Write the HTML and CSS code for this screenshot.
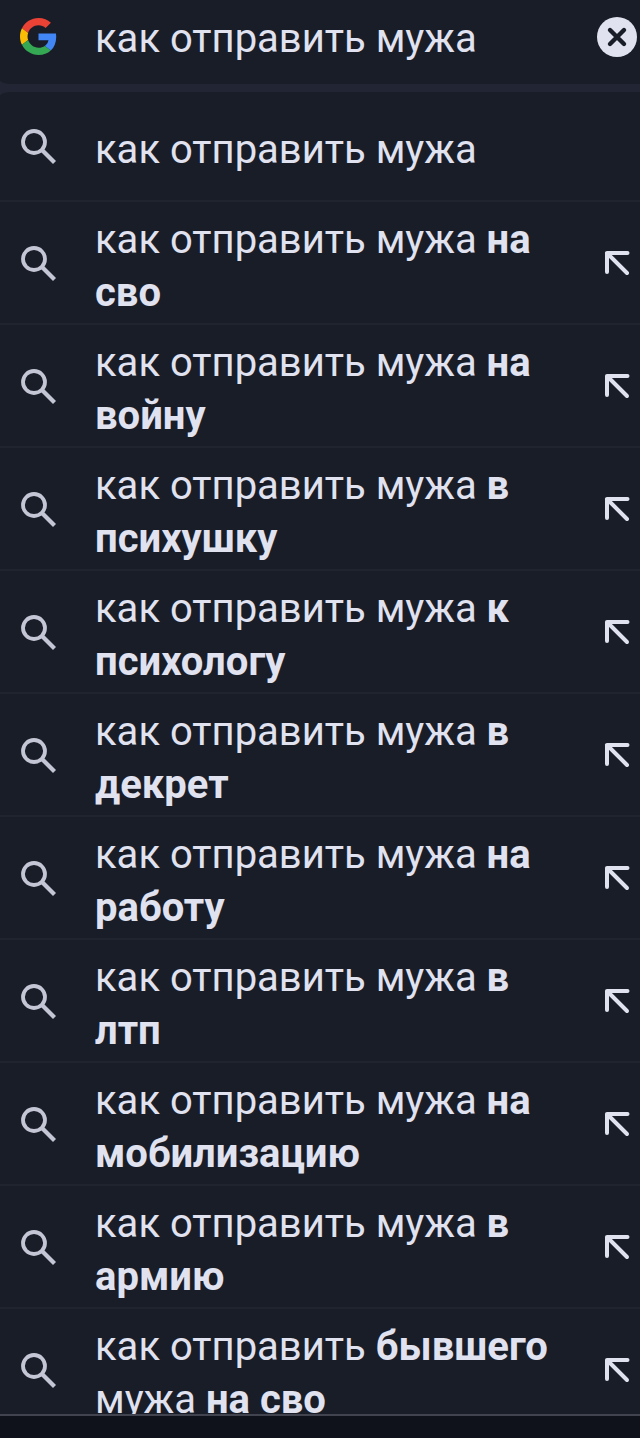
FILE: index.html
```html
<!DOCTYPE html>
<html lang="ru">
<head>
  <meta charset="UTF-8" />
  <meta name="viewport" content="width=device-width, initial-scale=1" />
  <title>как отправить мужа</title>
  <link rel="stylesheet" href="styles.css">
</head>
<body>
  <svg class="sprite" aria-hidden="true">
    <symbol id="search" viewBox="0 0 36 36">
      <circle cx="14" cy="14" r="11" fill="none" stroke="currentColor" stroke-width="3.8" />
      <path d="M22.5 22.5 34.5 34.5" fill="none" stroke="currentColor" stroke-width="4.2" />
    </symbol>
    <symbol id="arrow" viewBox="0 0 26 26">
      <path d="M3 22V3H23.5M3 3 23 23" fill="none" stroke="currentColor" stroke-width="4" stroke-linecap="round" stroke-linejoin="round" />
    </symbol>
  </svg>

  <form class="search-bar" role="search">
    <svg class="logo" viewBox="0 0 48 48" aria-hidden="true">
      <path fill="#ea4335" d="M24 9.5c3.54 0 6.71 1.22 9.21 3.6l6.85-6.85C35.9 2.38 30.47 0 24 0 14.62 0 6.51 5.38 2.56 13.22l7.98 6.19C12.43 13.72 17.74 9.5 24 9.5z" />
      <path fill="#4285f4" d="M46.98 24.55c0-1.57-.15-3.09-.38-4.55H24v9.02h12.94c-.58 2.96-2.26 5.48-4.78 7.18l7.73 6c4.51-4.18 7.09-10.36 7.09-17.65z" />
      <path fill="#fbbc05" d="M10.53 28.59c-.48-1.45-.76-2.99-.76-4.59s.27-3.14.76-4.59l-7.98-6.19C.92 16.46 0 20.12 0 24c0 3.88.92 7.54 2.56 10.78l7.97-6.19z" />
      <path fill="#34a853" d="M24 48c6.48 0 11.93-2.13 15.89-5.81l-7.73-6c-2.15 1.45-4.92 2.3-8.16 2.3-6.26 0-11.57-4.22-13.47-9.91l-7.98 6.19C6.51 42.62 14.62 48 24 48z" />
    </svg>
    <input class="query" type="text" aria-label="Поиск" value="как отправить мужа" />
    <button class="clear" type="reset" aria-label="Очистить">
      <svg viewBox="0 0 40 40" aria-hidden="true">
        <circle cx="20" cy="20" r="20" fill="currentColor" />
        <path d="M13 13 27 27M27 13 13 27" stroke="#191d28" stroke-width="4.4" stroke-linecap="round" />
      </svg>
    </button>
  </form>

  <ul class="suggestions">
    <li class="row single">
      <button class="suggestion"><svg class="icon"><use href="#search" /></svg><span>как отправить мужа</span></button>
    </li>
    <li class="row">
      <button class="suggestion"><svg class="icon"><use href="#search" /></svg><span>как отправить мужа <b>на сво</b></span></button>
      <button class="fill" aria-label="Вставить"><svg><use href="#arrow" /></svg></button>
    </li>
    <li class="row">
      <button class="suggestion"><svg class="icon"><use href="#search" /></svg><span>как отправить мужа <b>на войну</b></span></button>
      <button class="fill" aria-label="Вставить"><svg><use href="#arrow" /></svg></button>
    </li>
    <li class="row">
      <button class="suggestion"><svg class="icon"><use href="#search" /></svg><span>как отправить мужа <b>в психушку</b></span></button>
      <button class="fill" aria-label="Вставить"><svg><use href="#arrow" /></svg></button>
    </li>
    <li class="row">
      <button class="suggestion"><svg class="icon"><use href="#search" /></svg><span>как отправить мужа <b>к психологу</b></span></button>
      <button class="fill" aria-label="Вставить"><svg><use href="#arrow" /></svg></button>
    </li>
    <li class="row">
      <button class="suggestion"><svg class="icon"><use href="#search" /></svg><span>как отправить мужа <b>в декрет</b></span></button>
      <button class="fill" aria-label="Вставить"><svg><use href="#arrow" /></svg></button>
    </li>
    <li class="row">
      <button class="suggestion"><svg class="icon"><use href="#search" /></svg><span>как отправить мужа <b>на работу</b></span></button>
      <button class="fill" aria-label="Вставить"><svg><use href="#arrow" /></svg></button>
    </li>
    <li class="row">
      <button class="suggestion"><svg class="icon"><use href="#search" /></svg><span>как отправить мужа <b>в лтп</b></span></button>
      <button class="fill" aria-label="Вставить"><svg><use href="#arrow" /></svg></button>
    </li>
    <li class="row">
      <button class="suggestion"><svg class="icon"><use href="#search" /></svg><span>как отправить мужа <b>на мобилизацию</b></span></button>
      <button class="fill" aria-label="Вставить"><svg><use href="#arrow" /></svg></button>
    </li>
    <li class="row">
      <button class="suggestion"><svg class="icon"><use href="#search" /></svg><span>как отправить мужа <b>в армию</b></span></button>
      <button class="fill" aria-label="Вставить"><svg><use href="#arrow" /></svg></button>
    </li>
    <li class="row">
      <button class="suggestion"><svg class="icon"><use href="#search" /></svg><span>как отправить <b>бывшего</b> мужа <b>на сво</b></span></button>
      <button class="fill" aria-label="Вставить"><svg><use href="#arrow" /></svg></button>
    </li>
  </ul>

  <div class="bottom-bar"></div>
</body>
</html>
```
FILE: styles.css
```css
* {
  box-sizing: border-box;
}
body {
  margin: 0;
  height: 100vh;
  display: flex;
  flex-direction: column;
  background: #222533;
  color: #e0e2f0;
  font-family: Roboto, sans-serif;
  font-size: 40px;
  line-height: 53px;
}
button,
input {
  font: inherit;
  color: inherit;
  background: none;
  border: none;
  padding: 0;
  outline: none;
}
button {
  cursor: pointer;
}
svg {
  display: block;
}
.sprite {
  position: absolute;
  width: 0;
  height: 0;
}
.search-bar {
  flex: none;
  display: flex;
  align-items: center;
  padding: 9px 3px 20px 20px;
  background: #191d28;
  border-bottom-left-radius: 12px 4px;
}
.logo {
  flex: none;
  width: 37px;
  height: 37px;
  margin-right: 38px;
}
.query {
  flex: 1;
  min-width: 0;
  height: 55px;
  padding-top: 4px;
}
.clear,
.clear svg {
  flex: none;
  width: 40px;
  height: 40px;
}
.suggestions {
  flex: 1;
  min-height: 0;
  overflow: hidden;
  list-style: none;
  margin: 8px 0 0;
  padding: 0;
  background: #191d28;
  border-top-left-radius: 12px 4px;
}
.row {
  display: flex;
  min-height: 110px;
  border-bottom: 2px solid #20242f;
}
.suggestion {
  flex: 1;
  display: flex;
  align-items: center;
  text-align: left;
  padding-left: 20px;
}
.suggestion span {
  flex: 1;
  padding: 11px 0 4px;
}
.icon {
  flex: none;
  width: 36px;
  height: 36px;
  margin-right: 39px;
  color: #c4c6d6;
}
.fill {
  flex: none;
  width: 70px;
  padding-left: 34px;
}
.fill svg {
  width: 26px;
  height: 26px;
}
.bottom-bar {
  flex: none;
  height: 24px;
  background: #0f111b;
  border-top: 2px solid #41434e;
}
```
